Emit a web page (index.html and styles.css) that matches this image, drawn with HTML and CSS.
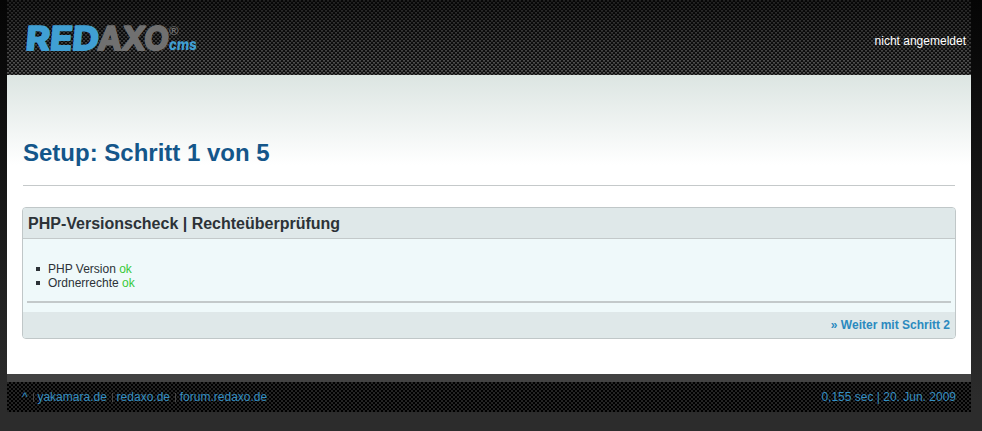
FILE: index.html
```html
<!DOCTYPE html>
<html lang="de">
<head>
<meta charset="utf-8">
<title>REDAXO Setup</title>
<link rel="stylesheet" href="styles.css">
</head>
<body>
<div class="page">
  <header class="header">
    <svg class="logo" width="200" height="60" viewBox="0 0 200 60" role="img" aria-label="REDAXO cms">
      <g transform="translate(18 50) skewX(-5)" class="logo-main">
        <text class="blue" x="0" y="0" textLength="73" lengthAdjust="spacingAndGlyphs">RED</text>
        <text class="grey" x="72" y="0" textLength="71" lengthAdjust="spacingAndGlyphs">AXO</text>
      </g>
      <text class="logo-reg grey" x="162" y="35">®</text>
      <text class="logo-cms blue" x="0" y="0" transform="translate(161.5 50) skewX(-5)" textLength="28" lengthAdjust="spacingAndGlyphs">cms</text>
    </svg>
    <p class="login">nicht angemeldet</p>
  </header>
  <main class="content">
    <h1>Setup: Schritt 1 von 5</h1>
    <section class="box">
      <h2>PHP-Versionscheck | Rechteüberprüfung</h2>
      <div class="box-body">
        <ul>
          <li>PHP Version <span class="ok">ok</span></li>
          <li>Ordnerrechte <span class="ok">ok</span></li>
        </ul>
      </div>
      <p class="next"><a>» Weiter mit Schritt 2</a></p>
    </section>
  </main>
  <footer class="footer">
    <ul class="links"><li>^</li><li>yakamara.de</li><li>redaxo.de</li><li>forum.redaxo.de</li></ul>
    <p>0,155 sec | 20. Jun. 2009</p>
  </footer>
</div>
</body>
</html>
```
FILE: styles.css
```css
* { box-sizing: border-box; margin: 0; padding: 0; }
body {
  height: 431px;
  overflow: hidden;
  background: linear-gradient(#050505, #0b0b0b 75px, #2c2c2c 400px, #2c2c2c) no-repeat;
  font: 12px/14px "Liberation Sans", Arial, sans-serif;
  color: #2c3237;
}
.page { width: 964px; margin-left: 7px; }
.header {
  height: 75px;
  display: flex;
  justify-content: space-between;
  padding: 0 5px 0 0;
  background:
    linear-gradient(rgba(0,0,0,.6), rgba(0,0,0,0) 75px),
    linear-gradient(rgba(0,0,0,0) 50%, rgba(0,0,0,.3) 50%) 0 0 / 4px 2px,
    repeating-conic-gradient(#141414 0 25%, #565656 0 50%) 0 0 / 4px 4px;
}
.logo { display: block; }
.logo-main { font: 700 32.5px Inter, sans-serif; stroke-width: 2px; stroke-linejoin: round; }
.logo-reg { font: 700 13px "Liberation Sans", sans-serif; }
.logo-cms { font: 800 16px Inter, sans-serif; }
.blue { fill: #409fd3; }
.grey { fill: #707070; }
.logo-main .blue { stroke: #409fd3; }
.logo-main .grey { stroke: #707070; }
.login { padding-top: 34px; color: #fff; }
.content {
  height: 299px;
  padding: 60px 15px 0;
  background: linear-gradient(#dce5e2, #fff 90px);
}
h1 {
  height: 51px;
  margin: 0 1px 21px;
  padding-top: 4px;
  border-bottom: 1px solid #c5c9ca;
  font-size: 24px;
  line-height: 28px;
  color: #14568a;
}
.box {
  height: 132px;
  width: 934px;
  border: 1px solid #c0c7c8;
  border-radius: 4px;
  background: #eff9fa;
  overflow: hidden;
}
h2 {
  height: 31px;
  padding-left: 5px;
  border-bottom: 1px solid #c3c9ca;
  background: #dfe8e9;
  font-size: 16px;
  line-height: 31px;
}
.box-body { height: 64px; margin: 0 4px; padding: 23px 0 0 21px; border-bottom: 2px solid #c3c9ca; }
.box-body ul { list-style: none; }
.box-body li { position: relative; }
.box-body li::before { content: ""; position: absolute; left: -12px; top: 5px; width: 4px; height: 4px; background: #2c3237; }
.ok { color: #38c938; }
.next {
  height: 26px;
  margin-top: 9px;
  padding-right: 5px;
  background: #dfe8e9;
  text-align: right;
  font-weight: bold;
  line-height: 26px;
  color: #2b8abf;
}
.footer {
  height: 38px;
  display: flex;
  justify-content: space-between;
  padding: 8px 15px 0;
  border-top: 8px solid #424242;
  background: repeating-conic-gradient(#000 0 25%, #242424 0 50%) 0 0 / 4px 4px;
  color: #348fc2;
}
.links { display: flex; list-style: none; }
.links li + li { margin-left: 5px; padding-left: 4.8px; background: linear-gradient(#454545, #454545) 0 3px / 1px 9px no-repeat; }
```
